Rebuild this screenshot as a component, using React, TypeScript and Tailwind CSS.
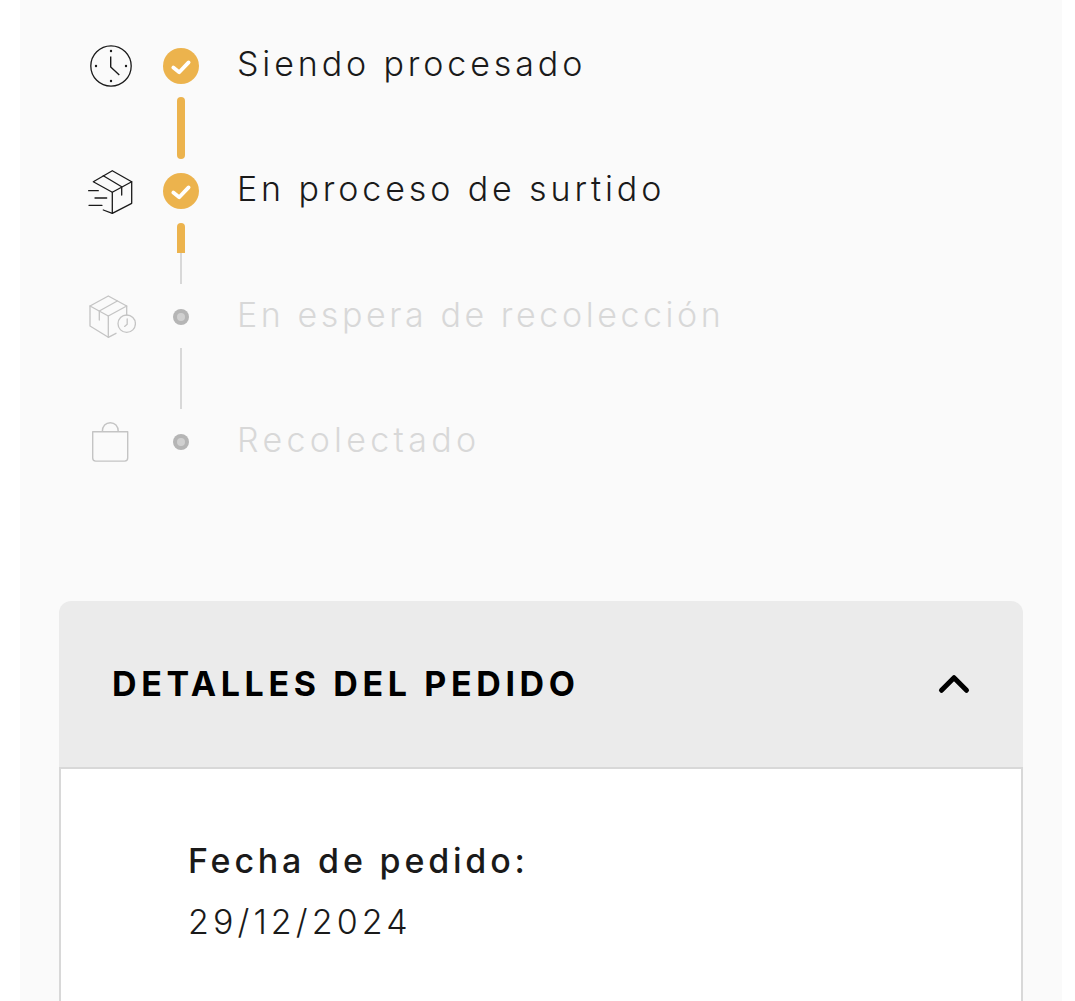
import { ChevronUp } from 'lucide-react';

const fontStack = "font-['Inter','Liberation_Sans',sans-serif]";

function ClockIcon() {
  return (
    <svg width="48" height="48" viewBox="0 0 48 48" fill="none" stroke="#1a1a1a" strokeWidth="1.3">
      <circle cx="23" cy="24" r="20.2" />
      <path d="M22.7 14.5v10.5l8.6 8" strokeWidth="1.4" />
      <circle cx="23" cy="9" r="1.2" fill="#1a1a1a" stroke="none" />
      <circle cx="23" cy="39" r="1.2" fill="#1a1a1a" stroke="none" />
      <circle cx="8" cy="24" r="1.2" fill="#1a1a1a" stroke="none" />
      <circle cx="38" cy="24" r="1.2" fill="#1a1a1a" stroke="none" />
    </svg>
  );
}

function ShippingBoxIcon() {
  return (
    <svg width="48" height="48" viewBox="0 -1 48 48" fill="none" stroke="#1a1a1a" strokeWidth="1.3" strokeLinejoin="round" strokeLinecap="round">
      <path d="M24.3 2.7 43.7 13.7 24.3 24.3 5.3 13.7Z" />
      <path d="M43.7 13.7v21.6L24.3 45.3V24.3" />
      <path d="M15.3 7.7 33.7 18.7V27" />
      <path d="M15.3 42 24.3 45.3" />
      <path d="M.6 22.7h9.7M7 30h11.7M1 37.3h13" />
    </svg>
  );
}

function BoxClockIcon() {
  return (
    <svg width="48" height="48" viewBox="0 1 48 48" fill="none" stroke="#c4c4c4" strokeWidth="1.3" strokeLinejoin="round" strokeLinecap="round">
      <path d="M20.3 4 38.7 14 20.3 24 2 14Z" />
      <path d="M2 14v20l18.3 11.3V24" />
      <path d="M20.3 45.3 28 41.3M38.7 14v9" />
      <path d="M29.3 9 11.3 19v9" />
      <circle cx="38.7" cy="31.7" r="8.7" />
      <path d="M39.2 27v5.2l-2.6 2.2" />
    </svg>
  );
}

function BagIcon() {
  return (
    <svg width="48" height="48" viewBox="0 0 48 48" fill="none" stroke="#c4c4c4" strokeWidth="1.4">
      <path d="M4.7 13.7h35v26.4a3 3 0 0 1-3 3h-29a3 3 0 0 1-3-3Z" strokeLinejoin="round" />
      <path d="M14.3 13.7c0-5.6 3.5-9 8-9s8 3.4 8 9" />
    </svg>
  );
}

function CheckDot() {
  return (
    <span className="block h-9 w-9 rounded-full bg-[#ecb34d]">
      <svg width="36" height="36" viewBox="0 0 36 36" fill="none" stroke="#ffffff" strokeWidth="3.8" strokeLinecap="round" strokeLinejoin="round">
        <path d="M10.3 19.6 16.2 24.2 25.6 14.4" />
      </svg>
    </span>
  );
}

function PendingDot() {
  return (
    <span className="flex h-4 w-4 items-center justify-center rounded-full bg-[#b5b5b5]">
      <span className="h-2 w-2 rounded-full bg-[#d0d0d0]" />
    </span>
  );
}

const steps = [
  { label: 'Siendo procesado', icon: <ClockIcon />, done: true, tracking: 'tracking-[0.114em]' },
  { label: 'En proceso de surtido', icon: <ShippingBoxIcon />, done: true, tracking: 'tracking-[0.114em]' },
  { label: 'En espera de recolección', icon: <BoxClockIcon />, done: false, tracking: 'tracking-[0.105em]' },
  { label: 'Recolectado', icon: <BagIcon />, done: false, tracking: 'tracking-[0.126em]' },
];

function Connector({ index }: { index: number }) {
  if (index === 0) {
    return (
      <div className="mt-[13px] mb-[14px] flex h-[62px] w-9 justify-center">
        <div className="h-full w-2 rounded-full bg-[#ecb34d]" />
      </div>
    );
  }
  if (index === 1) {
    return (
      <div className="mt-[14px] mb-[15px] flex w-9 flex-col items-center">
        <div className="h-[30px] w-2 rounded-t-full bg-[#ecb34d]" />
        <div className="h-[31px] w-0.5 bg-[#d8d8d8]" />
      </div>
    );
  }
  return (
    <div className="mt-[13px] mb-[15px] flex h-[61px] w-9 justify-center">
      <div className="h-full w-0.5 bg-[#d8d8d8]" />
    </div>
  );
}

export default function App() {
  return (
    <div className={`h-[1001px] overflow-hidden bg-white px-5 ${fontStack}`}>
      <div className="h-full w-[1042px] bg-[#fafafa] pt-12">
        <ol className="pl-[68px]">
          {steps.map((step, i) => (
            <li key={step.label}>
              <div className="flex h-9 items-center">
                <div className="flex w-12 shrink-0 items-center justify-center">{step.icon}</div>
                <div className="ml-[27px] flex w-9 shrink-0 justify-center">
                  {step.done ? <CheckDot /> : <PendingDot />}
                </div>
                <span
                  className={`ml-[38px] -translate-y-[2px] text-[34px] leading-none font-light whitespace-nowrap ${step.tracking} ${
                    step.done ? 'text-[#1a1a1a]' : 'text-[#d8d8d8]'
                  }`}
                >
                  {step.label}
                </span>
              </div>
              {i < steps.length - 1 && (
                <div className="ml-[75px]">
                  <Connector index={i} />
                </div>
              )}
            </li>
          ))}
        </ol>
        <section className="mt-[141px] ml-[39px] w-[964px]">
          <header className="flex h-[168px] items-center justify-between rounded-t-xl border-b-2 border-[#d8d8d8] bg-[#ebebeb] pr-[44px] pl-[53px]">
            <h2 className="text-[34px] leading-none font-bold tracking-[0.136em] text-black">DETALLES DEL PEDIDO</h2>
            <ChevronUp size={50} strokeWidth={2.4} color="#000000" />
          </header>
          <div className="h-[300px] border-x-2 border-[#d8d8d8] bg-white pt-[75px] pl-[127px]">
            <p className="text-[34px] leading-none font-medium tracking-[0.112em] text-[#1a1a1a]">Fecha de pedido:</p>
            <p className="mt-[27px] text-[34px] leading-none font-light tracking-[0.12em] text-[#1a1a1a]">29/12/2024</p>
          </div>
        </section>
      </div>
    </div>
  );
}
